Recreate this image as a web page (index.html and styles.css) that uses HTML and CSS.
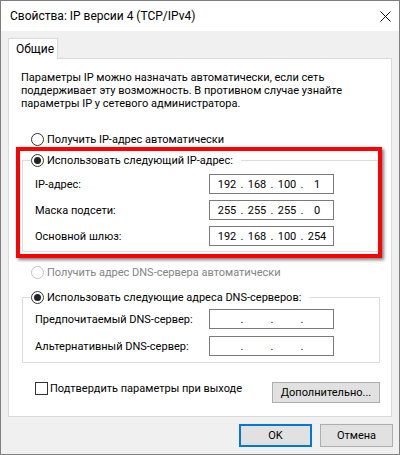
FILE: index.html
```html
<!DOCTYPE html>
<html lang="ru">
<head>
<meta charset="utf-8">
<title>Свойства: IP версии 4 (TCP/IPv4)</title>
<link rel="stylesheet" href="styles.css">
</head>
<body>
<div class="window">
  <div class="titlebar">
    <span class="title">Свойства: IP версии 4 (TCP/IPv4)</span>
    <span class="close"><svg width="11" height="11" viewBox="0 0 11 11"><path d="M0.5 0.5L10.5 10.5M10.5 0.5L0.5 10.5" stroke="#111" stroke-width="1" fill="none"/></svg></span>
  </div>
  <div class="main">
    <div class="tabs"><div class="tab">Общие</div></div>
    <div class="panel">
      <p class="desc">Параметры IP можно назначать автоматически, если сеть<br>поддерживает эту возможность. В противном случае узнайте<br>параметры IP у сетевого администратора.</p>
      <div class="radio first"><span class="rb"></span><span>Получить IP-адрес автоматически</span></div>
      <div class="group ipgroup">
        <div class="legend"><span class="rb on"></span><span>Использовать следующий IP-адрес:</span></div>
        <div class="row r1"><span class="lbl">IP-адрес:</span><span class="ip"><i>192</i><b>.</b><i>168</i><b>.</b><i>100</i><b>.</b><i>1</i></span></div>
        <div class="row"><span class="lbl">Маска подсети:</span><span class="ip"><i>255</i><b>.</b><i>255</i><b>.</b><i>255</i><b>.</b><i>0</i></span></div>
        <div class="row"><span class="lbl">Основной шлюз:</span><span class="ip"><i>192</i><b>.</b><i>168</i><b>.</b><i>100</i><b>.</b><i>254</i></span></div>
      </div>
      <div class="radio disabled dnsauto"><span class="rb"></span><span>Получить адрес DNS-сервера автоматически</span></div>
      <div class="group dnsgroup">
        <div class="legend"><span class="rb on"></span><span>Использовать следующие адреса DNS-серверов:</span></div>
        <div class="row d1"><span class="lbl">Предпочитаемый DNS-сервер:</span><span class="ip"><i></i><b>.</b><i></i><b>.</b><i></i><b>.</b><i></i></span></div>
        <div class="row d2"><span class="lbl">Альтернативный DNS-сервер:</span><span class="ip"><i></i><b>.</b><i></i><b>.</b><i></i><b>.</b><i></i></span></div>
      </div>
      <div class="bottomrow">
        <div class="check"><span class="cb"></span><span>Подтвердить параметры при выходе</span></div>
        <button class="btn adv">Дополнительно...</button>
      </div>
    </div>
  </div>
  <div class="footer">
    <button class="btn ok">OK</button>
    <button class="btn">Отмена</button>
  </div>
  <div class="mark"></div>
</div>
</body>
</html>
```
FILE: styles.css
```css
* { box-sizing: border-box; }
html, body { margin: 0; padding: 0; background: #fff; }
body {
  font-family: Roboto, "Noto Sans", "DejaVu Sans", sans-serif;
  font-size: 11px;
  color: #000;
}
.window {
  position: relative;
  width: 400px;
  height: 455px;
  border: 1px solid #7f7f7f;
  background: #f0f0f0;
  display: flex;
  flex-direction: column;
}
.titlebar {
  flex: none;
  height: 30px;
  background: #fff;
  display: flex;
  align-items: center;
  justify-content: space-between;
  padding-left: 9px;
  font-size: 12px;
}
.title { line-height: 30px; }
.close {
  width: 28px;
  height: 30px;
  display: flex;
  align-items: center;
  justify-content: center;
}
.main { padding: 7px 7px 0 7px; }
.tabs { display: flex; }
.tab {
  position: relative;
  z-index: 1;
  width: 50px;
  height: 21px;
  margin-bottom: -1px;
  background: #fff;
  border: 1px solid #d9d9d9;
  border-bottom: none;
  padding-left: 7px;
  line-height: 20px;
  font-size: 12px;
}
.panel {
  background: #fff;
  border: 1px solid #d9d9d9;
  height: 359px;
  padding: 12px 11px 0 13px;
}
.desc {
  margin: 0 0 0 -1px;
  line-height: 13px;
  white-space: nowrap;
}
.radio, .legend {
  display: flex;
  align-items: center;
  gap: 3px;
  height: 14px;
  white-space: nowrap;
}
.radio { margin-left: 9px; }
.radio.first { margin-top: 22px; }
.radio.disabled { color: #838383; }
.radio.disabled .rb { border-color: #c2c2c2; }
.rb {
  flex: none;
  width: 13px;
  height: 13px;
  border: 1px solid #333;
  border-radius: 50%;
  background: #fff;
  display: flex;
  align-items: center;
  justify-content: center;
}
.rb.on::after {
  content: "";
  width: 7px;
  height: 7px;
  border-radius: 50%;
  background: #222;
}
.group {
  border: 1px solid #dcdcdc;
}
.legend {
  width: max-content;
  margin: -8px 0 0 8px;
  padding-right: 8px;
  background: #fff;
}
.ipgroup { margin-top: 14px; padding-bottom: 5px; }
.dnsauto { margin-top: 13px; }
.dnsgroup { margin-top: 18px; padding-bottom: 6px; }
.row {
  display: flex;
  align-items: center;
  height: 20px;
  padding-left: 12px;
  margin-top: 6px;
}
.row.r1 { margin-top: 7px; }
.row.d1 { margin-top: 5px; }
.row.d2 { margin-top: 7px; }
.lbl { flex: 0 0 174px; white-space: nowrap; }
.ip {
  flex: none;
  width: 125px;
  height: 20px;
  border: 1px solid #7a7a7a;
  background: #fff;
  display: flex;
  align-items: center;
  padding-left: 6px;
}
.ip i {
  font-style: normal;
  width: 22px;
  text-align: center;
}
.ip b {
  font-weight: normal;
  width: 8px;
  text-align: center;
}
.bottomrow {
  display: flex;
  justify-content: space-between;
  align-items: flex-start;
  margin-top: 19px;
}
.check {
  display: flex;
  align-items: center;
  gap: 2px;
  margin-left: 13px;
  margin-top: -1px;
  height: 14px;
  white-space: nowrap;
}
.cb {
  width: 13px;
  height: 13px;
  border: 1px solid #333;
  background: #fff;
}
.btn {
  font-family: inherit;
  font-size: 11px;
  color: #000;
  background: #e1e1e1;
  border: 1px solid #adadad;
  padding: 0;
  margin: 0;
  height: 23px;
  width: 73px;
}
.btn.adv { width: 108px; height: 21px; }
.btn.ok { border: 2px solid #0078d7; }
.footer {
  display: flex;
  justify-content: flex-end;
  gap: 8px;
  padding: 7px 6px 0 0;
}
.mark {
  position: absolute;
  left: 15px;
  top: 146px;
  width: 366px;
  height: 111px;
  border: 4px solid #f00;
  box-shadow: 2px 2px 3px rgba(0, 0, 0, 0.5);
}
```
